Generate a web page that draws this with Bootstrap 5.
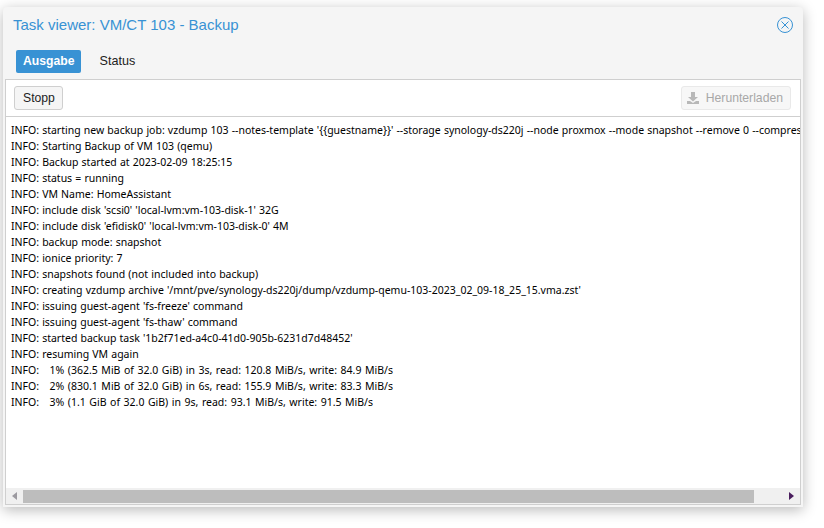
<!DOCTYPE html>
<html lang="de">
<head>
<meta charset="utf-8">
<title>Task viewer</title>
<link href="https://cdn.jsdelivr.net/npm/bootstrap@5.3.0/dist/css/bootstrap.min.css" rel="stylesheet">
<style>
html,body{height:100%;background:#fff;overflow:hidden}
body{padding:7px 21px 20px 3px;font-family:"Liberation Sans",Arial,sans-serif}
.tv-win{height:500px;width:800px;background:#f5f5f5;border-radius:4px 4px 0 0;box-shadow:0 3px 14px rgba(0,0,0,.28);padding:0 2px 2px}
.tv-head{height:36px;padding:0 8px;color:#3892d4;font-size:15px}
.tv-close{width:16px;height:16px}
.tv-tabs{height:36px;padding:7px 11px 6px}
.tv-tab{font-size:12.6px;line-height:23px;height:23px;padding:0 7px;border-radius:2px;color:#222}
.tv-tab-on{font-size:12.2px;background:#3892d4;color:#fff;font-weight:700;margin-right:11px}
.tv-panel{border:1px solid #cfcfcf;min-height:0;background:#fff}
.tv-bar{height:37px;padding:0 9px 0 8px;border-bottom:1px solid #cfcfcf}
.tv-btn{height:24px;font-size:12.2px;line-height:22px;padding:0 7px 0 8px;border:1px solid #cfcfcf;border-radius:3px;background:#f5f5f5;color:#222}
.tv-btn-off{color:#a8a8a8;border-color:#e9e9e9;background:#f7f7f7;padding:0 7px 0 4px}
.tv-btn-off svg{width:14px;height:14px;margin-right:6px}
.tv-log{min-height:0;padding:5px 0 0 5px;margin:0;font-family:"Noto Sans",Tahoma,sans-serif;font-size:10.5px;word-spacing:.4px;line-height:16px;color:#000;white-space:pre;overflow:hidden}
.tv-pct{word-spacing:.8px}
.tv-scroll{height:16px;background:#f0f0f0;padding:0 6px 0 6px}
.tv-thumb{margin-left:6px;width:731px;height:13px;background:#bdbdbd}
.tv-arrow-l{width:0;height:0;border:4px solid transparent;border-left-width:0;border-right:5px solid #9c9aa0}
.tv-arrow-r{width:0;height:0;border:4px solid transparent;border-right-width:0;border-left:5px solid #4a1e5e;margin-left:auto}
</style>
</head>
<body>
<div class="tv-win d-flex flex-column">
  <div class="tv-head d-flex align-items-center justify-content-between">
    <span>Task viewer: VM/CT 103 - Backup</span>
    <svg class="tv-close" viewBox="0 0 16 16" fill="none" stroke="#3892d4"><circle cx="8" cy="8" r="7.500"/><path d="M4.500 4.500l7 7M11.500 4.500l-7 7"/></svg>
  </div>
  <div class="tv-tabs d-flex align-items-center">
    <div class="tv-tab tv-tab-on">Ausgabe</div>
    <div class="tv-tab">Status</div>
  </div>
  <div class="tv-panel flex-grow-1 d-flex flex-column">
    <div class="tv-bar d-flex align-items-center justify-content-between">
      <div class="tv-btn">Stopp</div>
      <div class="tv-btn tv-btn-off d-flex align-items-center">
        <svg viewBox="0 0 14 14" fill="#b8b8b8"><path d="M5 1h4v5h3L7 10.500 2 6h3zM1 10h3l3 2 3-2h3v3H1z"/></svg>Herunterladen
      </div>
    </div>
    <pre class="tv-log flex-grow-1">INFO: starting new backup job: vzdump 103 --notes-template '{{guestname}}' --storage synology-ds220j --node proxmox --mode snapshot --remove 0 --compress zstd
INFO: Starting Backup of VM 103 (qemu)
INFO: Backup started at 2023-02-09 18:25:15
INFO: status = running
INFO: VM Name: HomeAssistant
INFO: include disk 'scsi0' 'local-lvm:vm-103-disk-1' 32G
INFO: include disk 'efidisk0' 'local-lvm:vm-103-disk-0' 4M
INFO: backup mode: snapshot
INFO: ionice priority: 7
INFO: snapshots found (not included into backup)
INFO: creating vzdump archive '/mnt/pve/synology-ds220j/dump/vzdump-qemu-103-2023_02_09-18_25_15.vma.zst'
INFO: issuing guest-agent 'fs-freeze' command
INFO: issuing guest-agent 'fs-thaw' command
INFO: started backup task '1b2f71ed-a4c0-41d0-905b-6231d7d48452'
INFO: resuming VM again
<span class="tv-pct">INFO:   1% (362.5 MiB of 32.0 GiB) in 3s, read: 120.8 MiB/s, write: 84.9 MiB/s
INFO:   2% (830.1 MiB of 32.0 GiB) in 6s, read: 155.9 MiB/s, write: 83.3 MiB/s
INFO:   3% (1.1 GiB of 32.0 GiB) in 9s, read: 93.1 MiB/s, write: 91.5 MiB/s</span></pre>
    <div class="tv-scroll d-flex align-items-center">
      <div class="tv-arrow-l"></div>
      <div class="tv-thumb"></div>
      <div class="tv-arrow-r"></div>
    </div>
  </div>
</div>
<script src="https://cdn.jsdelivr.net/npm/bootstrap@5.3.0/dist/js/bootstrap.bundle.min.js"></script>
</body>
</html>
